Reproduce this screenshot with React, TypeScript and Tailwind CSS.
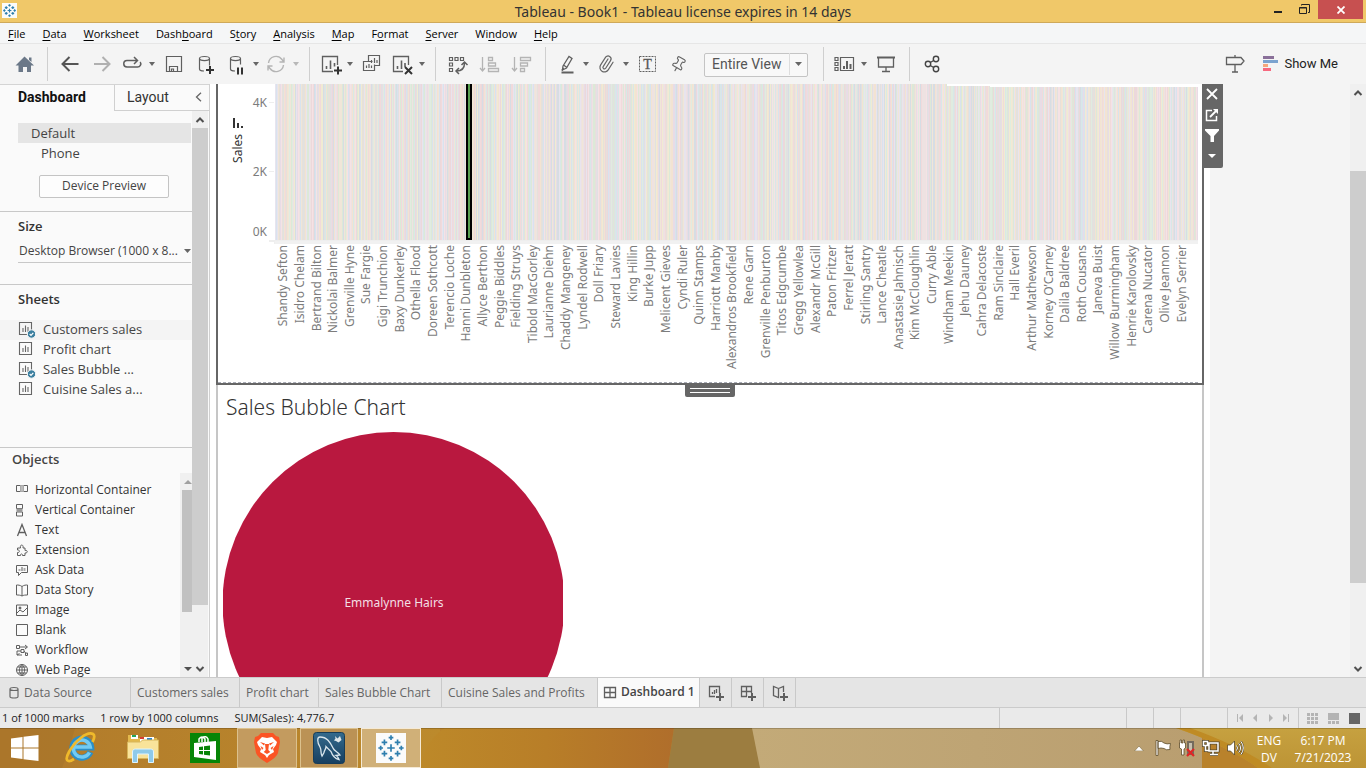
import React from 'react';
import { Paperclip, Pin } from 'lucide-react';

type Kids = { children?: React.ReactNode };

const names = [
  'Shandy Sefton', 'Isidro Chelam', 'Bertrand Bilton', 'Nickolai Balmer', 'Grenville Hyne', 'Sue Fargie',
  'Gigi Trunchion', 'Baxy Dunkerley', 'Othella Flood', 'Doreen Sothcott', 'Terencio Loche', 'Hanni Dunbleton',
  'Allyce Berthon', 'Peggie Biddles', 'Fielding Struys', 'Tibold MacGorley', 'Laurianne Diehn', 'Chaddy Mangeney',
  'Lyndel Rodwell', 'Doll Friary', 'Steward Lavies', 'King Hillin', 'Burke Jupp', 'Melicent Gieves', 'Cyndi Ruler',
  'Quinn Stamps', 'Harriott Manby', 'Alexandros Brookfield', 'Rene Garn', 'Grenville Penburton', 'Titos Edgcumbe',
  'Gregg Yellowlea', 'Alexandr McGill', 'Paton Fritzer', 'Ferrel Jeratt', 'Stirling Santry', 'Lance Cheatle',
  'Anastasie Jahnisch', 'Kim McCloughlin', 'Curry Able', 'Windham Meekin', 'Jehu Dauney', 'Cahra Delacoste',
  'Ram Sinclaire', 'Hall Everil', 'Arthur Mathewson', 'Korney O’Carney', 'Dalila Baldree', 'Roth Cousans',
  'Janeva Buist', 'Willow Burmingham', 'Henrie Karolovsky', 'Carena Nucator', 'Olive Jeannon', 'Evelyn Serrier',
];

const menus: [string, string, string][] = [
  ['', 'F', 'ile'], ['', 'D', 'ata'], ['', 'W', 'orksheet'], ['Dash', 'b', 'oard'], ['S', 't', 'ory'],
  ['', 'A', 'nalysis'], ['', 'M', 'ap'], ['F', 'o', 'rmat'], ['', 'S', 'erver'], ['Wi', 'n', 'dow'], ['', 'H', 'elp'],
];

function TableauMark({ size, bold }: { size: number; bold?: boolean }) {
  const plus = (x: number, y: number, r: number) => `M${x - r} ${y}h${2 * r}M${x} ${y - r}v${2 * r}`;
  return (
    <svg width={size} height={size} viewBox="0 0 32 32" fill="none" stroke="#2f7fae" aria-hidden="true">
      <rect width="32" height="32" fill="#fbfbfb" stroke="none" />
      <path strokeWidth={bold ? 2.6 : 1.8} d={[plus(16, 16, 4), plus(9, 10, 3), plus(23, 10, 3), plus(9, 22, 3), plus(23, 22, 3), plus(16, 5, 2.5), plus(16, 27, 2.5), plus(5, 16, 2.5), plus(27, 16, 2.5)].join('')} />
    </svg>
  );
}

function Glyph({ children, stroke = '#5f5f5f', size = 24 }: Kids & { stroke?: string; size?: number }) {
  return (
    <svg width={size} height={size} viewBox={`0 0 ${size} ${size}`} fill="none" stroke={stroke} aria-hidden="true">
      {children}
    </svg>
  );
}

function Tool({ label, narrow, children }: Kids & { label: string; narrow?: boolean }) {
  return (
    <button aria-label={label} className={`flex h-8 shrink-0 items-center justify-center ${narrow ? 'w-7' : 'w-8'}`}>
      {children}
    </button>
  );
}

function Caret({ faint, label }: { faint?: boolean; label: string }) {
  return (
    <button aria-label={label} className="flex h-8 w-3 shrink-0 items-center justify-center">
      <svg width="6" height="4" viewBox="0 0 6 4" fill={faint ? '#b8b8b8' : '#666'} aria-hidden="true"><path d="M0 0h6L3 4z" /></svg>
    </button>
  );
}

const Sep = () => <span className="flex w-3.5 shrink-0 justify-center self-stretch py-[3px]"><span className="w-px bg-[#cfcfcf]" /></span>;

const plusMark = <path d="M20 14.500v8M16 18.500h8" stroke="#333" strokeWidth="2" />;

function Toolbar() {
  return (
    <div role="toolbar" aria-label="Main toolbar" className="flex h-10 shrink-0 items-center bg-[#f4f4f4] pl-2 font-['Roboto',sans-serif]">
      <Tool label="Start page"><Glyph stroke="none"><path fill="#6b7888" d="M12.500 4.500L22 13.500h-3V20h-4v-5h-4v5H6.500v-6.500H3.500zM17 5.500h2.500V10L17 8z" /></Glyph></Tool>
      <Sep />
      <Tool label="Undo"><Glyph stroke="#555"><path strokeWidth="2" d="M11.500 5l-7 7 7 7M5 12h15.500" /></Glyph></Tool>
      <Tool label="Redo"><Glyph stroke="#b0b0b0"><path strokeWidth="2" d="M12.500 5l7 7-7 7M19 12H4" /></Glyph></Tool>
      <Tool narrow label="Replay"><Glyph><path strokeWidth="1.500" d="M17 8.500H7a3.200 3.200 0 0 0 0 6.500h10.500a3.200 3.200 0 0 0 2.700-5M14 5l3.500 3.500L14 12" /></Glyph></Tool>
      <Caret label="Replay options" />
      <Tool label="Save"><Glyph><path d="M4.500 4.500h15v15h-15zM7.500 19.500v-5h8v5M9.500 17h2v2.500h-2z" strokeWidth="1.200" /></Glyph></Tool>
      <Tool label="New data source"><Glyph><path strokeWidth="1.200" d="M5.500 6.500c0-2.700 10-2.700 10 0s-10 2.700-10 0V17c0 1.200 2 2 4.500 2M15.500 6.500v7" /><path d="M16 14v8M12 18h8" stroke="#333" strokeWidth="2" /></Glyph></Tool>
      <Tool narrow label="Pause auto updates"><Glyph><path strokeWidth="1.200" d="M6.500 6.500c0-2.700 10-2.700 10 0s-10 2.700-10 0V17c0 1.200 2 2 4.500 2M16.500 6.500v6" /><path d="M14 15.500v7M18 15.500v7" stroke="#333" strokeWidth="2" /></Glyph></Tool>
      <Caret label="Pause options" />
      <Tool narrow label="Run update"><Glyph stroke="#b4b4b4"><path strokeWidth="1.400" d="M4.500 11a7.500 7.500 0 0 1 13.500-3.500L20 10M20 5.500V10h-4.500M19.500 13A7.500 7.500 0 0 1 6 16.500L4 14M4 18.500V14h4.500" /></Glyph></Tool>
      <Caret faint label="Run update options" />
      <Sep />
      <Tool narrow label="New worksheet"><Glyph><path d="M19.500 13V4.500h-15v15H15" strokeWidth="1.300" /><path d="M8.500 14v3M12.500 8.500V17M16.500 11v3.500" strokeWidth="1.600" />{plusMark}</Glyph></Tool>
      <Caret label="New worksheet options" />
      <Tool label="Duplicate"><Glyph><path strokeWidth="1.200" d="M8.500 8V3.500h11v10H15M8.500 8v1M12.500 9.500h-9v9h11v-6" /><path d="M11.500 8v3M14.500 6v5M17 8v3M6.500 13.500v2.500M9 12v4M11.500 13.500v2.500" strokeWidth="1.200" /></Glyph></Tool>
      <Tool narrow label="Clear sheet"><Glyph><path d="M18.500 13V4.500h-15v15H13" strokeWidth="1.300" /><path d="M7.500 14v3M11.500 8.500V17M15 11v4" strokeWidth="1.600" /><path d="M15 15l7 7M22 15l-7 7" stroke="#333" strokeWidth="2" /></Glyph></Tool>
      <Caret label="Clear options" />
      <Sep />
      <Tool label="Swap rows and columns"><Glyph><path strokeWidth="1.200" d="M3.500 5.500h3v3h-3zM9 5.500h3v3H9zM14.500 5.500h3v3h-3zM3.500 11h3v3h-3zM3.500 16.500h3v3h-3z" /><path strokeWidth="1.500" d="M18.500 11c0 5-3 8-8 8M15.500 13l3-3 3 3M13 16l-3 3 3 3" /></Glyph></Tool>
      <Tool label="Sort ascending"><Glyph stroke="#b4b4b4"><path strokeWidth="1.300" d="M4.500 5v14M2 16l2.500 3L7 16M10.500 5.500h4v3h-4zM10.500 11h7v3h-7zM10.500 16.500h10v3h-10z" /></Glyph></Tool>
      <Tool label="Sort descending"><Glyph stroke="#b4b4b4"><path strokeWidth="1.300" d="M4.500 5v14M2 16l2.500 3L7 16M10.500 5.500h10v3h-10zM10.500 11h7v3h-7zM10.500 16.500h4v3h-4z" /></Glyph></Tool>
      <Sep />
      <Tool narrow label="Highlight"><Glyph><path d="M9 14l6-9.500 3 2-5.500 9.500-4 2zM9.500 13l3.500 2.500" strokeWidth="1.300" /><path d="M8 18.500l1.500-2.500" strokeWidth="1.500" /><path d="M7.500 20.500h12" strokeWidth="2" /></Glyph></Tool>
      <Caret label="Highlight options" />
      <Tool narrow label="Group members"><Paperclip size={18} strokeWidth={1.6} color="#666" className="-rotate-12" /></Tool>
      <Caret label="Group options" />
      <Tool label="Show mark labels"><Glyph><path d="M3.500 4.500h16v15h-16z" strokeDasharray="2 1" /><text x="11.500" y="17" fontFamily="Liberation Serif" fontSize="14" textAnchor="middle" fill="#555" stroke="#555" strokeWidth=".3">T</text></Glyph></Tool>
      <Tool narrow label="Fix axes"><Pin size={17} strokeWidth={1.6} color="#666" className="rotate-[30deg]" /></Tool>
      <div className="relative ml-3 h-6 w-[104px] shrink-0">
        <select aria-label="Fit" defaultValue="Entire View" className="h-full w-full appearance-none rounded-xs border border-[#c4c4c4] bg-[#f8f8f8] pb-px pl-[7px] text-[14px] leading-5 text-[#555]">
          <option>Entire View</option>
          <option>Standard</option>
        </select>
        <span className="pointer-events-none absolute inset-y-px right-px flex w-[18px] items-center justify-center border-l border-[#ddd]">
          <svg width="7" height="4" viewBox="0 0 7 4" fill="#666"><path d="M0 0h7L3.500 4z" /></svg>
        </span>
      </div>
      <span className="w-2 shrink-0" />
      <Sep />
      <Tool narrow label="Show cards"><Glyph><path strokeWidth="1.200" d="M3 5.500h3v3H3zM3 10.500h3v3H3zM3 15.500h3v3H3zM8.500 5.500h13v13h-13z" /><path strokeWidth="2" d="M12 14v3M15 9v8M18.500 12v5" /></Glyph></Tool>
      <Caret label="Cards options" />
      <Tool label="Presentation mode"><Glyph><path strokeWidth="1.300" d="M4.500 6v9h15V6M12 15v4.500M8 19.500h8" /><path d="M3 5.500h18" strokeWidth="2" /></Glyph></Tool>
      <Sep />
      <Tool label="Share"><Glyph stroke="#444"><g strokeWidth="1.400"><circle cx="8" cy="12" r="2.700" /><circle cx="16" cy="7" r="2.700" /><circle cx="16" cy="17" r="2.700" /><path d="M10.300 10.500l3.400-2M10.300 13.500l3.400 2" /></g></Glyph></Tool>
      <span className="min-w-0 flex-1" />
      <Tool label="Guide"><Glyph><path strokeWidth="1.300" d="M3.500 5.500H18l3 3.500-3 3.500H3.500zM12 3v2.500M12 12.500V20M9 20h6" /></Glyph></Tool>
      <button className="ml-3 mr-7 flex shrink-0 items-center gap-[6px] text-[13px] text-[#222]">
        <svg width="15" height="16" viewBox="0 0 15 16" aria-hidden="true"><path fill="#8a7099" d="M0 0h11v3H0z" /><path fill="#7ba3cf" d="M0 4h15v3H0z" /><path fill="#f5a77c" d="M0 8h5v3H0z" /><path fill="#f7697f" d="M0 12h8v3H0z" /></svg>
        Show Me
      </button>
    </div>
  );
}

function Chevron({ up }: { up?: boolean }) {
  return (
    <svg width="10" height="8" viewBox="0 0 10 8" fill="none" stroke="#505050" strokeWidth="2" aria-hidden="true">
      <path d={up ? 'M1.500 6L5 2.500 8.500 6' : 'M1.500 2L5 5.500 8.500 2'} />
    </svg>
  );
}

function ScrollBar({ children }: Kids) {
  return (
    <div aria-hidden="true" className="flex w-4 shrink-0 flex-col bg-[#f0f0f0]">
      <span className="flex h-[17px] items-center justify-center"><Chevron up /></span>
      <span className="flex flex-1 flex-col">{children}</span>
      <span className="flex h-[17px] items-center justify-center"><Chevron /></span>
    </div>
  );
}

function SheetIcon({ used }: { used?: boolean }) {
  return (
    <svg width="18" height="18" viewBox="0 0 18 18" fill="none" stroke="#666" aria-hidden="true">
      <path d="M1.500 1.500h12v12h-12zM5 7v4M7.500 4.500V11M10 6v5" strokeWidth="1.100" />
      {used && <><circle cx="13.500" cy="13" r="4.200" fill="#3b7f9f" stroke="#fafafa" /><path d="M11.700 13l1.300 1.400 2.300-2.600" stroke="#fff" strokeWidth="1.200" /></>}
    </svg>
  );
}

const objects: [string, React.ReactNode][] = [
  ['Horizontal Container', <><path d="M1.500 2.500h4v6h-4zM8.500 2.500h4v6h-4z" /><path d="M5.500 2.500h3v6h-3z" fill="#bbb" stroke="#aaa" /></>],
  ['Vertical Container', <><path d="M1.500 1.500h6v4h-6zM1.500 9h6v4h-6z" /><path d="M2 6h5v2.500H2z" fill="#999" stroke="#999" /></>],
  ['Text', <path d="M2.500 13L7 1.500 11.500 13M4 9.500h6" strokeWidth="1.300" />],
  ['Extension', <path d="M2.500 12.500v-3c2.500.5 2.500-3 0-2.500V5h3C4.500 1 9 1 8 5h2v2.500c3-.8 3 3 0 2.500v2.500H7.500c.5-2-2.500-2-2 0z" />],
  ['Ask Data', <><path d="M1.500 2.500h11v7h-6l-3 3v-3h-2z" /><path d="M4.500 8V6M7 8V4M9.500 8V5" stroke="#aaa" strokeWidth="2" /></>],
  ['Data Story', <path d="M7 3.500C5 2 3 2 1.500 2v10c2 0 4 0 5.500 1 1.500-1 3.500-1 5.500-1V2C11 2 9 2 7 3.500zM7 3.500V13" />],
  ['Image', <><path d="M1.500 2h11v10.500h-11zM2 10l3-3 3 2 4-4" /><circle cx="5" cy="5" r="1" fill="#666" /></>],
  ['Blank', <path d="M1.500 1.500h11v11h-11z" />],
  ['Workflow', <path d="M1.500 2.500h3v3h-3zM4.500 4H12M10 2l2.500 2L10 6M6 6.500h3v3H6zM9 8l2 2.500M10.500 10h2v2.500h-2zM6 8H2v4h5M4.500 10.500L2 12" />],
  ['Web Page', <><circle cx="7" cy="7" r="5.500" /><path d="M1.500 7h11M7 1.500v11M2.500 4h9M2.500 10h9M7 1.500c-3.500 3-3.500 8 0 11 3.500-3 3.500-8 0-11" /></>],
];

const sheets: [string, boolean][] = [['Customers sales', true], ['Profit chart', false], ['Sales Bubble ...', true], ['Cuisine Sales a...', false]];

function SidePanel() {
  return (
    <aside className="flex w-[210px] shrink-0 flex-col border-r border-[#d0d0d0] bg-[#fafafa] font-['Open_Sans',sans-serif] text-[#444]">
      <div className="flex h-[27px] shrink-0 border-t border-[#d4d4d4] font-['Roboto',sans-serif] text-[14px]">
        <button className="w-[114px] pb-px pl-[18px] text-left font-bold text-[#111]">Dashboard</button>
        <button className="flex-1 border-b border-l border-[#d0d0d0] pl-3 text-left text-[#333]">Layout</button>
        <button aria-label="Collapse pane" className="flex w-[22px] items-center justify-center border-b border-[#d0d0d0] pb-0.5">
          <svg width="7" height="10" viewBox="0 0 7 10" fill="none" stroke="#666" strokeWidth="1.300"><path d="M6 .8L1.500 5 6 9.200" /></svg>
        </button>
      </div>
      <div className="flex min-h-0 flex-1 pr-px">
        <div className="flex min-w-0 flex-1 flex-col">
          <section className="h-[101px] shrink-0 border-b border-[#c8c8c8] pt-3">
            <button className="ml-[18px] block h-5 w-[173px] bg-[#e5e5e5] pl-[13px] text-left text-[13px] leading-5">Default</button>
            <button className="ml-[18px] block h-5 pl-[23px] text-left text-[13px] leading-5">Phone</button>
            <button className="ml-[39px] mt-3 block h-[23px] w-[130px] rounded-xs border border-[#c4c4c4] bg-[#fdfdfd] pb-0.5 text-[12px] leading-[18px]">Device Preview</button>
          </section>
          <section className="h-[73px] shrink-0 border-b border-[#c8c8c8] pl-[18px] pt-[5px]">
            <h2 className="text-[13px] font-semibold leading-[18px] text-[#333]">Size</h2>
            <button className="mt-[5px] flex h-[23px] w-[173px] items-center justify-between whitespace-nowrap border-b border-[#c8c8c8] pl-px text-[12px]">
              <span>Desktop Browser (1000 x 8...</span>
              <svg width="7" height="4" viewBox="0 0 7 4" fill="#666"><path d="M0 0h7L3.500 4z" /></svg>
            </button>
          </section>
          <section className="h-[163px] shrink-0 border-b border-[#c8c8c8] pt-[5px]">
            <h2 className="pl-[18px] text-[13px] font-semibold leading-[18px] text-[#333]">Sheets</h2>
            <ul className="mt-3">
              {sheets.map(([name, used], i) => (
                <li key={name} className={i === 0 ? 'bg-[#f4f4f4]' : ''}>
                  <button className="flex h-5 w-full items-center gap-[7px] pl-[18px] text-left text-[13px]"><SheetIcon used={used} />{name}</button>
                </li>
              ))}
            </ul>
          </section>
          <section className="flex min-h-0 flex-1 flex-col pt-0.5">
            <h2 className="pl-3 text-[13px] font-semibold leading-[18px] text-[#444]">Objects</h2>
            <div className="mt-[5px] flex min-h-0 flex-1">
              <ul className="min-w-0 flex-1 overflow-hidden pt-[7px]">
                {objects.map(([name, icon]) => (
                  <li key={name}>
                    <button className="flex h-5 w-full items-center gap-[6px] whitespace-nowrap pl-[15px] text-left text-[12px] text-[#333]">
                      <Glyph size={14}>{icon}</Glyph>{name}
                    </button>
                  </li>
                ))}
              </ul>
              <div aria-hidden="true" className="flex w-3 shrink-0 flex-col items-end bg-[#f0f0f0]">
                <span className="flex h-[17px] items-center"><svg width="8" height="4" viewBox="0 0 8 4" fill="#a0a0a0"><path d="M4 0l4 4H0z" /></svg></span>
                <span className="w-[10px] grow-[123] basis-0 bg-[#c1c1c1]" />
                <span className="grow-[48] basis-0" />
                <span className="flex h-[17px] items-center"><svg width="8" height="4" viewBox="0 0 8 4" fill="#505050"><path d="M0 0h8L4 4z" /></svg></span>
              </div>
            </div>
          </section>
        </div>
        <ScrollBar><span className="grow-[478] basis-0 bg-[#cdcdcd]" /><span className="grow-[55] basis-0" /></ScrollBar>
      </div>
    </aside>
  );
}

const stripeColors = ['#d8e3ee', '#f3e3d2', '#f1dadb', '#d8e8e7', '#dce9d8', '#f1ebd2', '#e8dce6', '#f5e2e5', '#e6e1da', '#e1e1e1', '#d6dde4', '#ecd8db', '#e8e4ee', '#f0e6d8', '#e0ece0', '#eee2e2'];

function stripes() {
  let seed = 91;
  const out: string[] = [];
  for (let i = 0; i < 923; i++) {
    seed = (seed * 1103515245 + 12345) % 2147483648;
    out.push(stripeColors[Math.floor((seed / 2147483648) * stripeColors.length)]);
  }
  return out;
}

function SalesChart() {
  return (
    <section aria-label="Customers sales" className="relative z-10 h-[301px] shrink-0 border-x-2 border-b-2 border-[#666] bg-white pr-1 font-['Noto_Sans',sans-serif] text-[12px] text-[#7c7c7c]">
      <div className="flex h-full flex-col border-b border-dashed border-[#a8abb5]">
        <div className="flex h-40">
          <div className="flex w-8 flex-col items-center pl-2 pt-[34px]">
            <svg width="10" height="10" viewBox="0 0 10 10" fill="#333" aria-hidden="true"><path d="M0 0h2v10H0zM4 5h2v5H4zM8 8h2v2H8z" /></svg>
            <span className="mt-[6px] rotate-180 leading-4 text-[#333] [writing-mode:vertical-rl]">Sales</span>
          </div>
          <div className="flex w-[18px] flex-col items-end whitespace-nowrap pr-px leading-4">
            <span className="mt-[11px]">4K</span><span className="mt-[53px]">2K</span><span className="mt-11">0K</span>
          </div>
          <svg className="min-w-0 flex-1" height="160" viewBox="0 0 930 160" preserveAspectRatio="none" shapeRendering="crispEdges" role="img" aria-label="Sales per customer">
            <path d="M1 18h5M1 87h5M1 156h929v4H6v-3H1z" fill="#f1f1f1" stroke="#eee" strokeWidth="1" />
            {stripes().map((c, i) => {
              const top = i > 714 ? 3 : i > 671 ? 2 : 0;
              return <rect key={i} x={i + 7} y={top} width="1" height={156 - top} fill={c} />;
            })}
            <rect x="198" y="0" width="6" height="156" fill="#000" />
            <rect x="200" y="0" width="2" height="154" fill="#59a14f" />
          </svg>
        </div>
        <div className="ml-[57px] mr-2 grid grid-cols-[repeat(55,minmax(0,1fr))] items-start pt-px">
          {names.map((n) => (
            <span key={n} className="rotate-180 justify-self-center whitespace-nowrap leading-4 [writing-mode:vertical-rl]">{n}</span>
          ))}
        </div>
      </div>
      <div className="absolute top-0 -right-[21px] flex h-[84px] w-[21px] flex-col items-center justify-around rounded-br-xs bg-[#666] pr-0.5 pb-0.5">
        <button aria-label="Remove from dashboard"><Glyph size={14} stroke="#fff"><path d="M2 2l10 10M12 2L2 12" strokeWidth="1.800" /></Glyph></button>
        <button aria-label="Go to sheet"><Glyph size={14} stroke="#fff"><path d="M7 2.500H1.500v10h10V8" strokeWidth="1.500" /><path d="M5 9l6-6" strokeWidth="1.800" /><path d="M8 1h5v5z" fill="#fff" stroke="none" /></Glyph></button>
        <button aria-label="Use as filter"><Glyph size={14} stroke="none"><path d="M0 1h14v1.500L9 8v6H5.500V8L0 2.500z" fill="#fff" /></Glyph></button>
        <button aria-label="More options"><Glyph size={14} stroke="none"><path d="M3 5h8l-4 4z" fill="#fff" /></Glyph></button>
      </div>
      <div aria-hidden="true" className="absolute -bottom-[14px] left-1/2 flex h-3 w-[50px] -translate-x-1/2 flex-col items-center gap-[3px] rounded-b-xs bg-[#666] pt-[3px]">
        <span className="h-px w-10 bg-white" /><span className="h-px w-10 bg-white" />
      </div>
    </section>
  );
}

function BubbleChart() {
  return (
    <section className="min-h-0 flex-1 overflow-hidden border-x-2 border-[#c6c6c6] bg-white pl-[5px] font-['Noto_Sans',sans-serif]">
      <h2 className="pl-[3px] pt-2 text-[21px] font-light leading-7 text-[#333]">Sales Bubble Chart</h2>
      <svg className="mt-[11px]" width="340" height="344" viewBox="0 0 340 344" role="img" aria-label="Sales bubble">
        <circle cx="170.500" cy="171" r="171" fill="#b9183f" />
        <text x="171" y="175" textAnchor="middle" fontSize="12" fill="#f3dfe4">Emmalynne Hairs</text>
      </svg>
    </section>
  );
}

function TabButton({ width, children }: Kids & { width: string }) {
  return <button className={`${width} shrink-0 whitespace-nowrap border-r border-[#c9c9c9] pl-[6px] text-left`}>{children}</button>;
}

function SheetTabs() {
  return (
    <nav aria-label="Sheets" className="flex h-[31px] shrink-0 border-y border-[#cbcbcb] bg-[#e5e5e5] font-['Open_Sans',sans-serif] text-[12px] text-[#666]">
      <button className="flex w-[131px] shrink-0 items-center gap-[5px] border-r border-[#c9c9c9] pl-[9px]">
        <svg width="10" height="14" viewBox="0 0 10 14" fill="none" stroke="#666" aria-hidden="true"><path d="M1 3c0-2 8-2 8 0s-8 2-8 0v7.500c0 2 8 2 8 0V3" strokeWidth="1.200" /></svg>
        Data Source
      </button>
      <TabButton width="w-[109px]">Customers sales</TabButton>
      <TabButton width="w-[79px]">Profit chart</TabButton>
      <TabButton width="w-[123px]">Sales Bubble Chart</TabButton>
      <TabButton width="w-[156px]">Cuisine Sales and Profits</TabButton>
      <button aria-current="page" className="flex w-[102px] shrink-0 items-center gap-1 border-r border-[#c9c9c9] bg-[#fafafa] pb-0.5 pl-[5px] font-semibold text-[#444]">
        <Glyph size={14}><path d="M1.500 2.500h11v10h-11zM7 2.500v10M1.500 7.500h11" strokeWidth="1.300" /></Glyph>Dashboard 1
      </button>
      {[
        ['New Worksheet', 'M11.500 8V1.500h-10v10H7M4.500 7v2M6.500 5v4M8.500 4v4'],
        ['New Dashboard', 'M11.500 8V1.500h-10v10H7M6.500 1.500v10M1.500 6.500h10'],
        ['New Story', 'M6.500 3.500l-5-2v9l5 2zM6.500 3.500l5-2V7'],
      ].map(([label, d]) => (
        <button key={label} aria-label={label} className="flex w-8 shrink-0 items-center justify-center border-r border-[#c9c9c9]">
          <svg width="16" height="16" viewBox="0 0 16 16" fill="none" stroke="#5f5f5f" aria-hidden="true"><path d={d} strokeWidth="1.300" /><path d="M12 8v8M8 12h8" strokeWidth="2" /></svg>
        </button>
      ))}
    </nav>
  );
}

function StatusBar() {
  return (
    <footer className="flex h-5 shrink-0 items-center bg-[#eaeaea] font-['Open_Sans',sans-serif] text-[11px] text-[#222]">
      <div className="flex flex-1 gap-4 whitespace-nowrap pl-0.5"><span>1 of 1000 marks</span><span>1 row by 1000 columns</span><span>SUM(Sales): 4,776.7</span></div>
      <div aria-hidden="true" className="flex self-stretch">
        <span className="w-[127px] border-l border-[#c9c9c9]" /><span className="w-[27px] border-l border-[#c9c9c9]" /><span className="w-[27px] border-l border-[#c9c9c9]" /><span className="w-[47px] border-l border-[#c9c9c9]" />
      </div>
      <div className="flex w-[71px] items-center justify-around self-stretch border-l border-[#c9c9c9] px-1">
        {[['First', 'M0 0h1v8H0zM6 0v8L2 4z'], ['Previous', 'M5 0v8L1 4z'], ['Next', 'M1 0v8l4-4z'], ['Last', 'M0 0v8l4-4zM5 0h1v8H5z']].map(([label, d]) => (
          <button key={label} aria-label={label}><svg width="6" height="8" viewBox="0 0 6 8" fill="#b4b4b4"><path d={d} /></svg></button>
        ))}
      </div>
      <div className="flex w-[68px] items-center justify-between self-stretch border-l border-[#c9c9c9] pl-2 pr-[6px]">
        <button aria-label="Sheet sorter"><svg width="11" height="11" viewBox="0 0 11 11" fill="#b4b4b4"><path d="M0 0h3v3H0zM4 0h3v3H4zM8 0h3v3H8zM0 4h3v3H0zM4 4h3v3H4zM8 4h3v3H8zM0 8h3v3H0zM4 8h3v3H4zM8 8h3v3H8z" /></svg></button>
        <button aria-label="Filmstrip"><svg width="11" height="11" viewBox="0 0 11 11" fill="#b4b4b4"><path d="M0 0h11v7H0zM0 8h3v3H0zM4 8h3v3H4zM8 8h3v3H8z" /></svg></button>
        <button aria-label="Tabs"><svg width="11" height="11" viewBox="0 0 11 11" fill="#666"><path d="M0 0h11v11H0z" /></svg></button>
      </div>
    </footer>
  );
}

function Taskbar() {
  return (
    <div className="relative flex h-10 shrink-0 items-stretch overflow-hidden bg-[#b9822b] font-['Open_Sans',sans-serif] text-[12px] text-white">
      <svg aria-hidden="true" className="absolute inset-0 h-full w-full" viewBox="0 0 1366 40" preserveAspectRatio="none">
        <defs>
          <linearGradient id="left"><stop offset="0" stopColor="#b17a2b" /><stop offset="1" stopColor="#bc8a2c" /></linearGradient>
          <linearGradient id="warm"><stop offset="0" stopColor="#bd8929" /><stop offset=".5" stopColor="#b87e28" /><stop offset="1" stopColor="#b06e2b" /></linearGradient>
          <linearGradient id="sand"><stop offset="0" stopColor="#c3aa78" /><stop offset="1" stopColor="#b99e70" /></linearGradient>
          <linearGradient id="gold" x2="0" y2="1"><stop stopColor="#c6a140" /><stop offset="1" stopColor="#bd9435" /></linearGradient>
        </defs>
        <path fill="url(#left)" d="M0 0h440v40H0z" />
        <path fill="#a8752b" opacity=".7" d="M0 0h75q-5 20-13 40H0z" />
        <path fill="url(#warm)" d="M445 0h229l-6 40H420q5-28 25-40z" />
        <path fill="#9c7d40" d="M674 0h90v40h-96z" />
        <path fill="url(#sand)" d="M752 0h450v40H760z" />
        <path fill="url(#gold)" d="M1176 0h190v40h-108q-30-22-82-40z" />
        <path fill="#bf8b24" d="M1176 0h14q50 18 82 40h-14q-30-22-82-40z" />
        <path fill="#000" opacity=".18" d="M0 0h1366v1H0z" />
      </svg>
      <div className="relative flex flex-1 items-stretch">
        <button aria-label="Start" className="flex w-[50px] items-center justify-center">
          <svg width="28" height="26" viewBox="0 0 28 26" fill="#fff"><path d="M0 3.500L11.500 2v10.500H0zM12.500 1.800L27.500 0v12.500h-15zM0 13.500h11.500V24L0 22.500zM12.500 13.500h15V26l-15-1.800z" /></svg>
        </button>
        <button aria-label="Internet Explorer" className="flex w-[62px] items-center justify-center">
          <svg width="32" height="32" viewBox="0 0 32 32" fill="none">
            <path d="M25.500 20a9.500 9.500 0 1 1 .8-4.500H10" stroke="#2b8fc9" strokeWidth="6" />
            <path d="M24.500 20.500a8.500 8.500 0 1 1 .8-5.500H9" stroke="#73cbf2" strokeWidth="3.500" />
            <path d="M9 27C3 31-1 29 4 20 10 9 22-1 28 2c2.500 1.500 1 5-.5 8" stroke="#efb92b" strokeWidth="2.800" />
          </svg>
        </button>
        <button aria-label="File Explorer" className="flex w-[62px] items-center justify-center">
          <svg width="34" height="32" viewBox="0 0 34 32">
            <path fill="#e3b94c" d="M2 3h8l2 3h19v21H2z" /><path fill="#fff" d="M5 3h7v4H5zM14 5h14v5H14z" /><path fill="#22a55a" d="M6 3h4v2H6z" /><path fill="#2d83ca" d="M21 6h5v2h-5z" /><path fill="#d63d31" d="M14 5h4v2h-4z" />
            <path fill="#f9e39a" stroke="#d7b55a" d="M1.500 10h13l2-2h16v18.500h-31z" />
            <path fill="#8ecae9" stroke="#dff4ff" d="M6.500 20c0-2 1-3 3-3h15c2 0 3 1 3 3v10.500h-5V22h-11v8.500h-5z" />
          </svg>
        </button>
        <button aria-label="Store" className="flex w-[63px] items-center justify-center pr-0.5">
          <svg width="30" height="30" viewBox="0 0 30 30"><path fill="#078507" d="M0 0h30v30H0z" /><path fill="none" stroke="#fff" strokeWidth="1.500" d="M9 9V6q3-4 6 0v3M12 9V5q4-3 6 1v3" /><path fill="#fff" d="M4 10l22-2v19L4 24z" /><path fill="#078507" d="M9 14l4-.5V17H9zM14 13.300l6-.8V17h-6zM9 18h4v3.500L9 21zM14 18h6v4.500l-6-.8z" /></svg>
        </button>
        <button aria-label="Brave" className="mr-[3px] flex w-[60px] items-center justify-center border border-[#dcc18d] bg-[#c39b5f]">
          <svg width="28" height="32" viewBox="0 0 28 32"><path fill="#fb5424" d="M8 1h12l3 3 3 1 1 5-2 11q-1 4-11 10Q4 25 3 21L1 10l1-5 3-1z" /><path fill="#fff" d="M14 6l5-1 5 5-1 3-3 4 1 3-5 3-2 3-2-3-5-3 1-3-3-4-1-3 5-5z" /><path fill="#fb5424" d="M7 10l5 1.500-1 2zM21 10l-5 1.500 1 2zM12 12h4l-.7 6 2 2-3.300 2-3.300-2 2-2zM7.500 14l3 2-1.500 2zM20.500 14l-3 2 1.500 2z" /></svg>
        </button>
        <button aria-label="MySQL Workbench" className="mr-[3px] flex w-[58px] items-center justify-center border border-[#dcc18d] bg-[#bb9255]">
          <svg width="32" height="32" viewBox="0 0 32 32"><defs><linearGradient id="sea" x2="0" y2="1"><stop stopColor="#346a8d" /><stop offset="1" stopColor="#173f60" /></linearGradient></defs><rect x=".5" y=".5" width="31" height="31" rx="3" fill="url(#sea)" stroke="#173c58" /><path d="M9 24c-2-4 0-5-2-9-3-5-3-10 0-10 7 0 10 5 13 11 1 3 5 4 7 7l-4 .5c2 1 2 2 3 4-5-1-7-5-8-8l-5-5c0 3-2 4-2 6z" fill="none" stroke="#dbe7ee" strokeWidth="1.300" /><path d="M22 4l2.500 2.500L27 4l1.500 4-3 2.500-2.500-1.500-2-.5 1.500-2z" fill="#dfe7ea" /></svg>
        </button>
        <button aria-label="Tableau" className="flex w-[60px] items-center justify-center border border-[#f5ead6] bg-[#d0b078]"><TableauMark size={30} /></button>
      </div>
      <div className="relative flex items-center">
        <button aria-label="Show hidden icons" className="flex w-6 justify-center"><svg width="10" height="5" viewBox="0 0 10 5" fill="#fff" stroke="#7a6a40" strokeWidth=".6"><path d="M5 0l4.500 5h-9z" /></svg></button>
        <button aria-label="Action Center" className="flex w-6 justify-center"><svg width="18" height="18" viewBox="0 0 18 18" fill="#fff" stroke="#5d4d2b" strokeWidth=".8"><path d="M2 1.500h2v15H2zM4 2.500q4-1 6 1.500 3 1.500 6.500.5-1 3-.5 6-4 1-6-1-3-1-6 0z" /></svg></button>
        <button aria-label="Battery" className="flex w-6 justify-center"><svg width="18" height="18" viewBox="0 0 18 18"><path fill="#746b5d" d="M9 2h7v14H9z" /><path fill="#c8bfae" d="M11 4h3v8h-3z" /><path fill="#fff" stroke="#5d4d2b" strokeWidth=".8" d="M2 1h1.500v3H5V1h1.500v3h1v5L6 10v6H3.500v-6L1.500 9V4H2z" /><path d="M9 10l7 7M16 10l-7 7" stroke="#e02525" strokeWidth="2.200" /></svg></button>
        <button aria-label="Network" className="flex w-6 justify-center"><svg width="18" height="18" viewBox="0 0 18 18" fill="none"><path d="M7 4h9v8H7zM11 12v3M8 15.500h8M1.500 2.500h4v4h-4zM3.500 6.500v5h3" stroke="#54482c" strokeWidth="3.200" /><path d="M7 4h9v8H7zM11 12v3M8 15.500h8M1.500 2.500h4v4h-4zM3.500 6.500v5h3" stroke="#fff" strokeWidth="1.500" /></svg></button>
        <button aria-label="Volume" className="flex w-6 justify-center"><svg width="18" height="18" viewBox="0 0 18 18" fill="none"><path d="M1.500 6h3l4-4v14l-4-4h-3z" fill="#fff" stroke="#54482c" strokeWidth=".8" /><path d="M10.500 6.500q2 2.500 0 5M12.800 4.500q3.500 4.500 0 9M15 2.500q4.500 6.500 0 13" stroke="#54482c" strokeWidth="2" /><path d="M10.500 6.500q2 2.500 0 5M12.800 4.500q3.500 4.500 0 9M15 2.500q4.500 6.500 0 13" stroke="#fff" /></svg></button>
        <button className="w-11 pt-0.5 text-center leading-[17px]">ENG<br />DV</button>
        <button className="mr-[11px] w-16 whitespace-nowrap pt-0.5 text-center leading-[17px]">6:17 PM<br />7/21/2023</button>
      </div>
    </div>
  );
}

export default function App() {
  return (
    <div className="flex h-screen flex-col overflow-hidden bg-white">
      <header className="relative flex h-[23px] shrink-0 items-center justify-center border-b border-[#cfa95a] bg-[#f0c869] font-['Noto_Sans',sans-serif] text-[14px] text-[#333]">
        <span className="absolute left-0.5 top-[3px]"><TableauMark size={15} bold /></span>
        <h1 className="whitespace-nowrap">Tableau - Book1 - Tableau license expires in 14 days</h1>
        <div className="absolute right-[3px] top-0 flex h-[19px] items-center">
          <button aria-label="Minimize" className="flex w-[26px] justify-center"><span className="mt-[5px] h-[2px] w-2 bg-[#222]" /></button>
          <button aria-label="Restore" className="flex w-[26px] justify-center"><svg width="11" height="11" viewBox="0 0 11 11" fill="none" stroke="#222"><path d="M.5 3.500h7v6h-7zM.5 4h7M2.500 1.500V.5h8v8H9" /></svg></button>
          <button aria-label="Close" className="ml-px flex h-full w-[45px] items-center justify-center bg-[#c75050]"><svg width="8" height="8" viewBox="0 0 8 8" stroke="#fff" strokeWidth="1.800"><path d="M.5.5l7 7M7.500.5l-7 7" /></svg></button>
        </div>
      </header>
      <nav aria-label="Menu" className="flex h-[21px] shrink-0 items-center gap-[17px] border-b border-[#e6e6e6] bg-[#f5f6f7] pl-2 pt-0.5 font-['Open_Sans',sans-serif] text-[11px] text-black">
        {menus.map(([a, b, c]) => (
          <button key={a + b + c} className="whitespace-nowrap">{a}<u className="underline-offset-2">{b}</u>{c}</button>
        ))}
      </nav>
      <Toolbar />
      <div className="flex min-h-0 flex-1">
        <SidePanel />
        <main className="flex min-w-0 flex-1 bg-[#f4f4f4]">
          <div className="flex w-[1000px] min-w-0 flex-col bg-white px-[6px]">
            <SalesChart />
            <BubbleChart />
          </div>
        </main>
        <ScrollBar><span className="grow-[70] basis-0" /><span className="grow-[413] basis-0 bg-[#cdcdcd]" /><span className="grow-[77] basis-0" /></ScrollBar>
      </div>
      <SheetTabs />
      <StatusBar />
      <Taskbar />
    </div>
  );
}
